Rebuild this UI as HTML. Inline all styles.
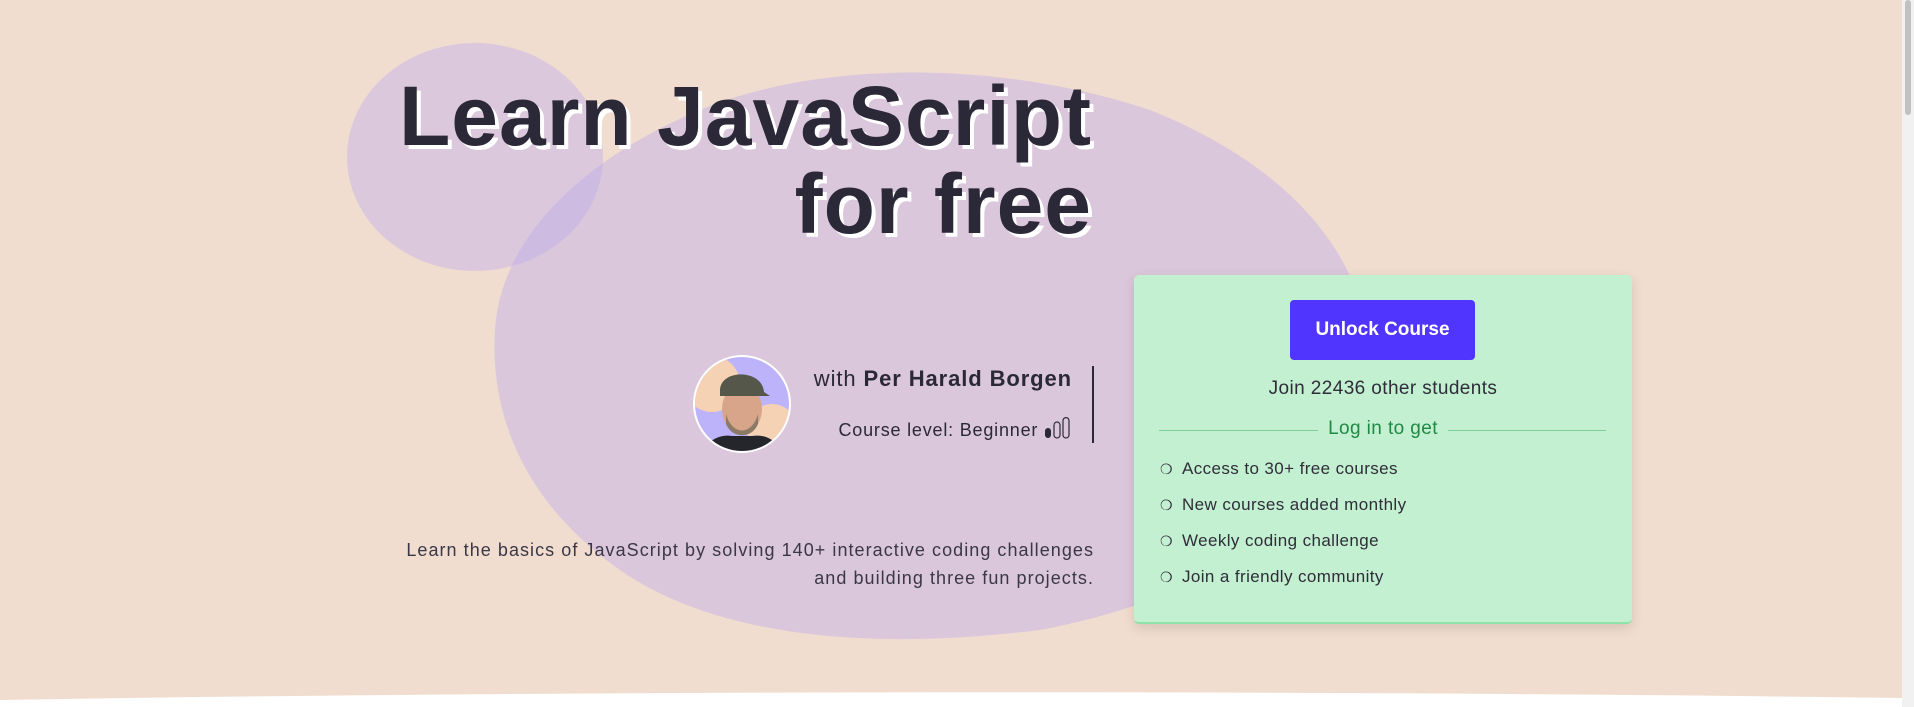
<!DOCTYPE html>
<html><head><meta charset="utf-8"><style>
html,body{margin:0;padding:0}
body{width:1914px;height:707px;overflow:hidden;background:#f0ddcf;position:relative;font-family:"Liberation Sans",sans-serif;color:#2b2838}
.abs{position:absolute}
h1{position:absolute;right:822px;top:72px;margin:0;font-size:84px;line-height:88px;letter-spacing:1px;font-weight:700;text-align:right;color:#2b2838;text-shadow:4px 4px 0 #fff}
.card{left:1134px;top:275px;width:498px;height:349px;background:#c3f0d0;border-radius:5px;box-shadow:0 4px 12px rgba(0,0,0,.12);border-bottom:2px solid #8fe3a8;box-sizing:border-box}
.btn{left:156px;top:25px;width:185px;height:60px;background:#5034ff;border-radius:4px;color:#fff;font-weight:700;font-size:19px;line-height:60px;text-align:center}
.li{left:26px;font-size:17px;color:#2f2d3a;letter-spacing:.4px}
.li span{display:inline-block;width:22px;font-size:14px}
</style></head><body>
<svg class="abs" style="left:0;top:0" width="1914" height="707">
<defs><clipPath id="sb"><ellipse cx="475" cy="157" rx="128" ry="114"/></clipPath>
<path id="big" d="M700 110 C820 60 1000 60 1150 110 C1300 170 1380 270 1370 390 C1350 520 1200 600 1040 630 C880 650 720 640 620 570 C520 500 490 410 495 330 C500 240 580 160 700 110Z"/></defs>
<use href="#big" fill="#dbc7db"/>
<ellipse cx="475" cy="157" rx="128" ry="114" fill="#dbc8dc"/>
<use href="#big" fill="#cdbbe1" clip-path="url(#sb)"/>
<path d="M0 707 L0 700 C600 690 1300 690 1902 698 L1902 707Z" fill="#fff"/>
<rect x="1902" y="0" width="12" height="707" fill="#f1f1f1"/>
<rect x="1905" y="0" width="6" height="115" rx="3" fill="#c1c1c1"/>
</svg>
<h1>Learn JavaScript<br>for free</h1>
<svg class="abs" style="left:692px;top:354px" width="100" height="100" viewBox="0 0 100 100">
<defs><clipPath id="c"><circle cx="50" cy="50" r="47"/></clipPath></defs>
<circle cx="50" cy="50" r="49" fill="#fff"/>
<g clip-path="url(#c)">
<rect width="100" height="100" fill="#bdb3fb"/>
<circle cx="20" cy="30" r="28" fill="#f5d2b4"/>
<circle cx="80" cy="75" r="25" fill="#f5d2b4"/>
<ellipse cx="50" cy="55" rx="20" ry="25" fill="#d9a58a"/>
<path d="M28 35 C30 15 70 15 72 38 L78 42 L28 42Z" fill="#55574a"/>
<path d="M34 60 C40 82 60 82 66 60 L66 70 C60 85 40 85 34 70Z" fill="#8b7a66"/>
<path d="M10 100 C15 85 30 80 40 82 L60 82 C72 80 85 85 90 100Z" fill="#25252c"/>
</g>
</svg>
<div class="abs" style="right:842px;top:366px;font-size:22px;letter-spacing:.9px">with <b>Per Harald Borgen</b></div>
<div class="abs" style="right:842px;top:417px;font-size:18px;letter-spacing:.8px">Course level: Beginner <svg width="28" height="22" viewBox="0 0 28 22" style="vertical-align:-3px"><rect x="1" y="11" width="6" height="10" rx="3" fill="#2b2838"/><rect x="10" y="5" width="6" height="16" rx="3" fill="none" stroke="#2b2838" stroke-width="1.2"/><rect x="19" y="0.6" width="6" height="20.4" rx="3" fill="none" stroke="#2b2838" stroke-width="1.2"/></svg></div>
<div class="abs" style="left:1092px;top:366px;width:2px;height:77px;background:#2b2838"></div>
<div class="abs" style="right:820px;top:536px;font-size:18px;line-height:28px;text-align:right;color:#3a3746;letter-spacing:1.05px;white-space:nowrap">Learn the basics of JavaScript by solving 140+ interactive coding challenges<br>and building three fun projects.</div>
<div class="abs card">
<div class="abs btn">Unlock Course</div>
<div class="abs" style="left:0;width:498px;top:103px;text-align:center;font-size:19px;color:#2f2d3a;letter-spacing:.4px">Join 22436 other students</div>
<div class="abs" style="left:25px;top:155px;width:159px;height:1px;background:#80cf98"></div>
<div class="abs" style="left:0;width:498px;top:143px;text-align:center;font-size:19px;color:#1f8a45;letter-spacing:.4px">Log in to get</div>
<div class="abs" style="left:314px;top:155px;width:158px;height:1px;background:#80cf98"></div>
<div class="abs li" style="top:184px"><span>❍</span>Access to 30+ free courses</div>
<div class="abs li" style="top:220px"><span>❍</span>New courses added monthly</div>
<div class="abs li" style="top:256px"><span>❍</span>Weekly coding challenge</div>
<div class="abs li" style="top:292px"><span>❍</span>Join a friendly community</div>
</div>
</body></html>
